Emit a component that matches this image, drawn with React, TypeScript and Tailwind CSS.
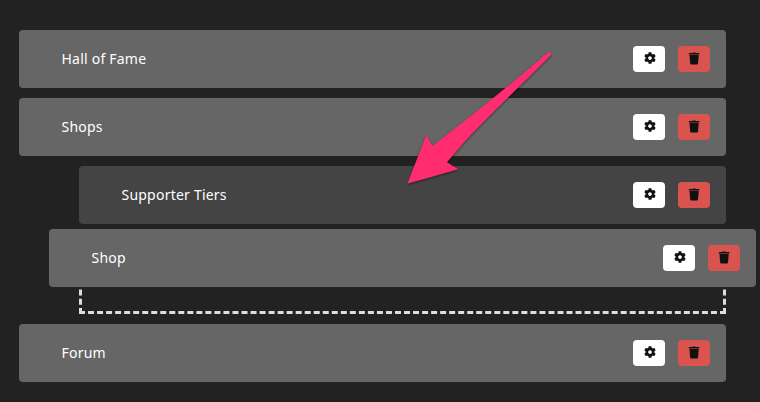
import { FaCog } from "react-icons/fa";

function TrashIcon() {
  return (
    <svg viewBox="0 0 12 14" className="relative -top-px h-3.5 w-3" fill="currentColor">
      <path d="M4.2 2.1 Q4.5 1.4 5.1 1.4 H7 Q7.6 1.4 7.9 2.1 H11 Q11.4 2.1 11.4 2.5 V3.5 H0.8 V2.5 Q0.8 2.1 1.2 2.1 Z" />
      <path d="M1.5 4 H10.7 L10 12.5 Q9.9 13.5 8.9 13.5 H3.3 Q2.3 13.5 2.2 12.5 Z" />
    </svg>
  );
}

function NavItem({ label, className = "" }: { label: string; className?: string }) {
  return (
    <div
      className={`flex h-[58px] items-center justify-between rounded pl-[42.5px] pr-4 text-sm text-white ${className}`}
    >
      <span className="tracking-[0.22px]">{label}</span>
      <div className="flex gap-[13px]">
        <button
          aria-label={`Edit ${label}`}
          className="flex h-[26px] w-8 items-center justify-center rounded bg-white text-[#111]"
        >
          <FaCog size={12} className="relative left-px -top-px" />
        </button>
        <button
          aria-label={`Delete ${label}`}
          className="flex h-[26px] w-8 items-center justify-center rounded bg-[#d9534f] text-[#111]"
        >
          <TrashIcon />
        </button>
      </div>
    </div>
  );
}

export default function App() {
  return (
    <main className="relative h-[402px] w-[760px] overflow-hidden bg-[#222] pl-[19px] pr-[34px] pt-[30px] font-['Noto_Sans',sans-serif]">
      <div className="flex flex-col gap-2.5">
        <NavItem label="Hall of Fame" className="bg-[#666]" />
        <NavItem label="Shops" className="bg-[#666]" />
        <div className="flex flex-col gap-2.5 pl-[60px]">
          <NavItem label="Supporter Tiers" className="bg-[#444]" />
          <div className="h-20 border-[3px] border-dashed border-[#ddd]" />
        </div>
        <NavItem label="Forum" className="bg-[#666]" />
      </div>

      {/* Item being dragged over its drop target */}
      <NavItem label="Shop" className="absolute left-[49px] top-[229px] w-[707px] bg-[#666]" />

      <svg
        viewBox="0 0 160 150"
        className="pointer-events-none absolute left-[400px] top-[40px] h-[150px] w-[160px] overflow-visible drop-shadow-[0_1px_1px_rgba(0,0,0,0.5)]"
      >
        <path
          d="M7.3 143.7 L26.5 94.5 L32.2 106 C72 76 110 45 147.6 12.7 Q149.3 11.6 150.6 13.1 Q151.6 14.5 150.2 16 C118 49 78 84 47 122.3 L58.3 129.3 Z"
          fill="#ff2d6f"
        />
      </svg>
    </main>
  );
}
